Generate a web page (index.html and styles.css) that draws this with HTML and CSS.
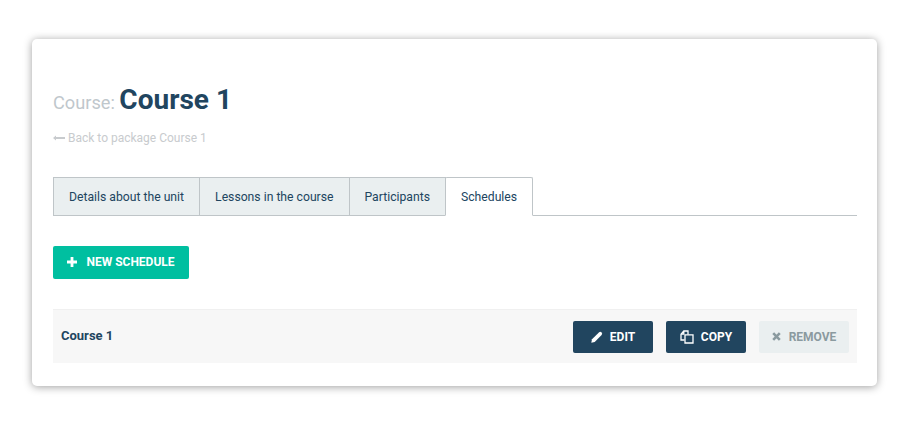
FILE: index.html
```html
<!DOCTYPE html>
<html lang="en">
<head>
  <meta charset="UTF-8">
  <meta name="viewport" content="width=device-width, initial-scale=1.0">
  <title>Course 1</title>
  <link rel="stylesheet" href="styles.css">
</head>
<body>
  <div class="card">
    <!-- title -->
    <h1 class="page-title"><span class="page-title__label">Course: </span>Course 1</h1>
    <a class="back-link" href="#"><svg class="back-link__arrow" width="12" height="6" viewBox="0 0 12 6"><path d="M0 3 L3 0.5 V2 H12 V4 H3 V5.5 Z" fill="currentColor"/></svg> Back to package Course 1</a>

    <!-- tabs -->
    <div class="tabs">
      <a class="tab" href="#">Details about the unit</a>
      <a class="tab" href="#">Lessons in the course</a>
      <a class="tab" href="#">Participants</a>
      <a class="tab tab--active" href="#">Schedules</a>
    </div>

    <a class="btn btn--new" href="#">
      <svg width="10" height="10" viewBox="0 0 10 10"><path d="M3.6 0 H6.4 V3.6 H10 V6.4 H6.4 V10 H3.6 V6.4 H0 V3.6 H3.6 Z" fill="currentColor"/></svg>
      New schedule
    </a>

    <!-- schedule list -->
    <div class="schedule-row">
      <span class="schedule-row__name">Course 1</span>
      <div class="schedule-row__actions">
        <a class="btn btn--dark" href="#">
          <svg width="12" height="12" viewBox="0 0 12 12"><path d="M0.3 11.7 L1 8.3 L7.9 1.4 Q9.2 0.2 10.6 1.4 Q11.8 2.8 10.6 4.1 L3.7 11 Z" fill="currentColor"/></svg>
          Edit
        </a>
        <a class="btn btn--dark" href="#">
          <svg width="14" height="14" viewBox="0 0 14 14"><path d="M4.5 10 H1 V4.2 L3.8 1 H8 V4.5 M1 4.2 H3.8 V1" fill="none" stroke="currentColor" stroke-width="1.3"/><path d="M5 4.8 H13 V13 H5 Z" fill="none" stroke="currentColor" stroke-width="1.3"/></svg>
          Copy
        </a>
        <a class="btn btn--muted" href="#">
          <svg width="9" height="9" viewBox="0 0 9 9"><path d="M1.2 1.2 L7.8 7.8 M7.8 1.2 L1.2 7.8" stroke="currentColor" stroke-width="2.6" fill="none"/></svg>
          Remove
        </a>
      </div>
    </div>
  </div>
</body>
</html>
```

FILE: styles.css
```css
/* base */
body {
  margin: 0;
  padding: 39px 32px;
  background: #fff;
  font-family: Roboto, "Liberation Sans", sans-serif;
  color: #21455f;
}

a {
  text-decoration: none;
}

/* card */
.card {
  box-sizing: border-box;
  width: 845px;
  height: 347px;
  padding: 43px 20px 0 21px;
  background: #fff;
  border-radius: 5px;
  box-shadow: 0 1px 8px rgba(0, 0, 0, 0.38);
}

/* title */
.page-title {
  margin: 0;
  font-size: 28px;
  line-height: 36px;
  font-weight: 700;
  color: #21455f;
}

.page-title__label {
  font-size: 18.2px;
  font-weight: 400;
  color: #bfc7cc;
}

.back-link {
  display: block;
  margin-top: 9px;
  font-size: 12px;
  line-height: 16px;
  color: #c8cbce;
}

.back-link__arrow {
  vertical-align: 1px;
}

/* tabs */
.tabs {
  display: flex;
  margin-top: 31px;
  border-bottom: 1px solid #bfc5c8;
}

.tab {
  height: 37px;
  padding: 0 15px;
  margin-bottom: -1px;
  margin-right: -1px;
  display: flex;
  align-items: center;
  font-size: 12.2px;
  background: #eaeff0;
  border: 1px solid #bfc5c8;
  color: #21455f;
}

.tab--active {
  background: #fff;
  border-bottom-color: #fff;
  border-radius: 2px 2px 0 0;
}

/* buttons */
.btn {
  display: inline-flex;
  align-items: center;
  justify-content: center;
  box-sizing: border-box;
  border-radius: 2px;
  font-size: 12px;
  font-weight: 700;
  text-transform: uppercase;
  color: #fff;
}

.btn--new {
  width: 136px;
  height: 33px;
  margin-top: 30px;
  padding-bottom: 1px;
  gap: 9px;
  background: #00bfa0;
}

.btn--dark {
  width: 80px;
  height: 32px;
  gap: 7px;
  background: #21455f;
}

.btn--muted {
  width: 90px;
  height: 32px;
  gap: 8px;
  background: #eaeff0;
  color: #8a9a9f;
}

/* schedule row */
.schedule-row {
  display: flex;
  align-items: center;
  justify-content: space-between;
  box-sizing: border-box;
  height: 54px;
  margin-top: 30px;
  padding: 0 8px;
  background: #f7f7f7;
  border-top: 1px solid #f0f0f0;
}

.schedule-row__name {
  padding-bottom: 2px;
  font-size: 13px;
  font-weight: 700;
  color: #21455f;
}

.schedule-row__actions {
  display: flex;
  gap: 13px;
}
```
